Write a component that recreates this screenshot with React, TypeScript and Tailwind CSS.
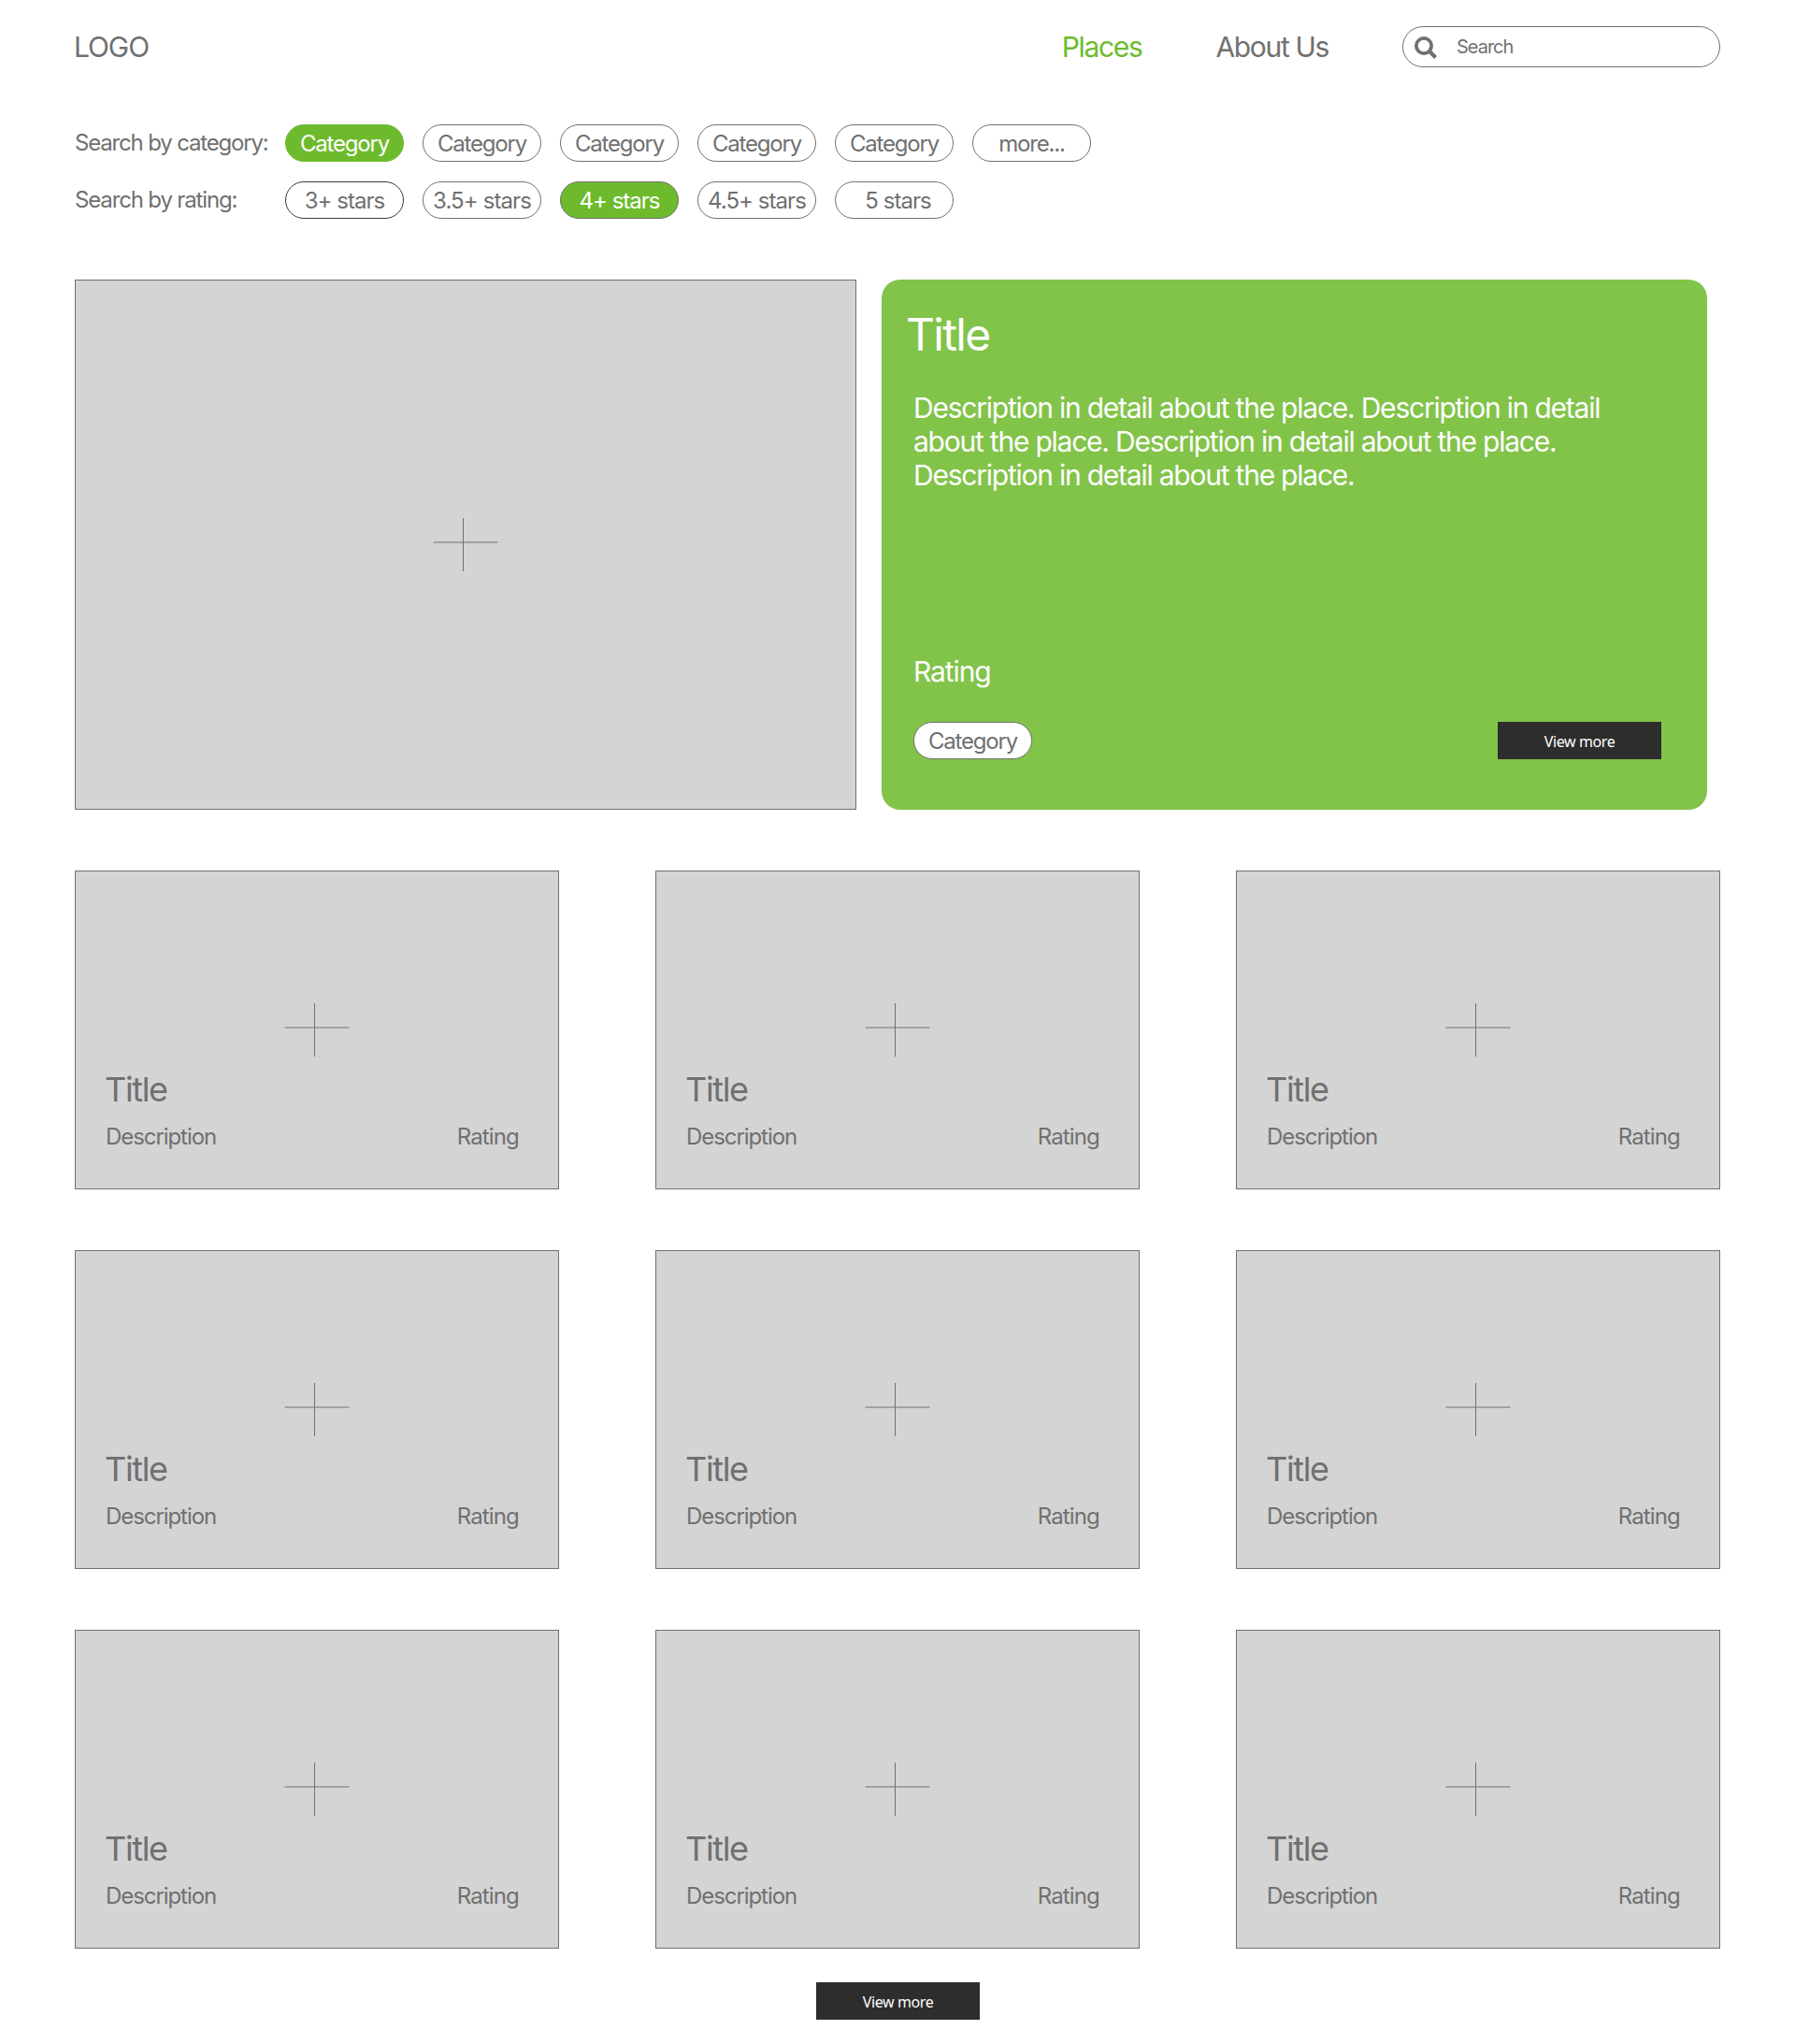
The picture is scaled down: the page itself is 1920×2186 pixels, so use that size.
import React from "react";

type PillProps = { label: string; tone?: "plain" | "dark" | "filled" | "outlined"; textClass?: string };

const tones = {
  plain: "border-[#707070] bg-white text-[#707070]",
  dark: "border-[#393939] bg-white text-[#707070]",
  filled: "border-[#6dbb2d] bg-[#6dbb2d] text-white",
  outlined: "border-[#707070] bg-[#6dbb2d] text-white",
};

function Pill({ label, tone = "plain", textClass = "tracking-[-1.2px]" }: PillProps) {
  return (
    <button
      className={`flex h-10 w-[127px] shrink-0 items-center justify-center rounded-[20px] border whitespace-nowrap text-[24px] leading-[38px] ${tones[tone]}`}
    >
      <span className={`pt-[2px] ${textClass}`}>{label}</span>
    </button>
  );
}

function Cross() {
  return (
    <svg width="70" height="57" viewBox="0 0 70 57" className="block shrink-0">
      <path d="M0.5 26H69.5" stroke="#a2a2a2" strokeWidth="2" />
      <path d="M32.5 0V57" stroke="#707070" strokeWidth="1" />
    </svg>
  );
}

function ViewMore() {
  return (
    <button className="h-10 w-[175px] bg-[#2d2d2d] pt-[2px] text-center font-['Noto_Sans',sans-serif] text-[16px] leading-[38px] tracking-[-0.4px] text-white">
      View more
    </button>
  );
}

function PlaceCard() {
  return (
    <article className="flex h-[341px] flex-col border border-[#707070] bg-[#d4d4d4] pt-[141px]">
      <div className="pl-[223px]">
        <Cross />
      </div>
      <h3 className="mt-[13px] pl-[31px] text-[36px] leading-[44px] tracking-[-1.35px]">Title</h3>
      <div className="mt-[14px] flex justify-between pr-[42px] pl-8 text-[24px] leading-[30px]">
        <span className="tracking-[-1.07px]">Description</span>
        <span className="tracking-[-0.85px]">Rating</span>
      </div>
    </article>
  );
}

const categories = ["Category", "Category", "Category", "Category", "Category", "more..."];

export default function App() {
  return (
    <div className="h-[2186px] w-[1920px] bg-white px-20 pt-7 font-['Inter',sans-serif] text-[#707070]">
      <header className="flex h-11 items-center">
        <div className="-ml-px text-[30px] leading-[44px] tracking-[-1.1px]">LOGO</div>
        <nav className="ml-auto flex gap-[79px] pr-[79px] text-[30px] leading-[44px] tracking-[-1.33px]">
          <a className="text-[#6dbb2d]">Places</a>
          <a>About Us</a>
        </nav>
        <div className="flex h-11 w-[340px] items-center rounded-[22px] border border-[#707070] pl-3">
          <svg width="25" height="25" viewBox="0 0 25 25" fill="none" className="mt-[2px] block">
            <circle cx="10" cy="10" r="8.1" stroke="#707070" strokeWidth="3.8" />
            <path d="M15.6 15.6L22.6 22.6" stroke="#707070" strokeWidth="4.2" />
          </svg>
          <span className="ml-5 text-[20px] leading-[42px] tracking-[-1px]">Search</span>
        </div>
      </header>

      <section className="mt-[61px] flex flex-col gap-[21px]">
        <div className="flex">
          <div className="w-[225px] text-[24px] leading-[40px] tracking-[-1.17px] whitespace-nowrap">
            Search by category:
          </div>
          <div className="flex gap-5">
            {categories.map((label, i) => (
              <Pill key={i} label={label} tone={i === 0 ? "filled" : "plain"} />
            ))}
          </div>
        </div>
        <div className="flex">
          <div className="w-[225px] text-[24px] leading-[40px] tracking-[-1.15px] whitespace-nowrap">
            Search by rating:
          </div>
          <div className="flex gap-5">
            <Pill label="3+ stars" tone="dark" textClass="tracking-[-0.95px]" />
            <Pill label="3.5+ stars" textClass="tracking-[-0.9px]" />
            <Pill label="4+ stars" tone="outlined" textClass="tracking-[-1px]" />
            <Pill label="4.5+ stars" textClass="tracking-[-0.95px]" />
            <Pill label="5 stars" textClass="pl-2 tracking-[-0.95px]" />
          </div>
        </div>
      </section>

      <section className="mt-[65px] flex gap-[27px]">
        <div className="h-[567px] w-[836px] border border-[#707070] bg-[#d4d4d4] pt-[254px] pl-[382px]">
          <Cross />
        </div>
        <div className="flex h-[567px] w-[883px] flex-col rounded-[20px] bg-[#82c34a] pt-[29px] pr-[49px] pl-[34px] text-white">
          <h2 className="-ml-[8px] text-[48px] leading-[60px] tracking-[-1.7px]">Title</h2>
          <p className="mt-[30px] text-[30px] leading-[36px] tracking-[-1.23px] whitespace-nowrap">
            Description in detail about the place. Description in detail
            <br />
            about the place. Description in detail about the place.
            <br />
            Description in detail about the place.
          </p>
          <p className="mt-[174px] text-[30px] leading-[36px] tracking-[-1.1px]">Rating</p>
          <div className="mt-[36px] flex justify-between">
            <Pill label="Category" />
            <ViewMore />
          </div>
        </div>
      </section>

      <section className="mt-[65px] grid grid-cols-[518px_518px_518px] gap-x-[103px] gap-y-[65px]">
        {Array.from({ length: 9 }, (_, i) => (
          <PlaceCard key={i} />
        ))}
      </section>

      <div className="mt-9 flex pl-[793px]">
        <ViewMore />
      </div>
    </div>
  );
}
